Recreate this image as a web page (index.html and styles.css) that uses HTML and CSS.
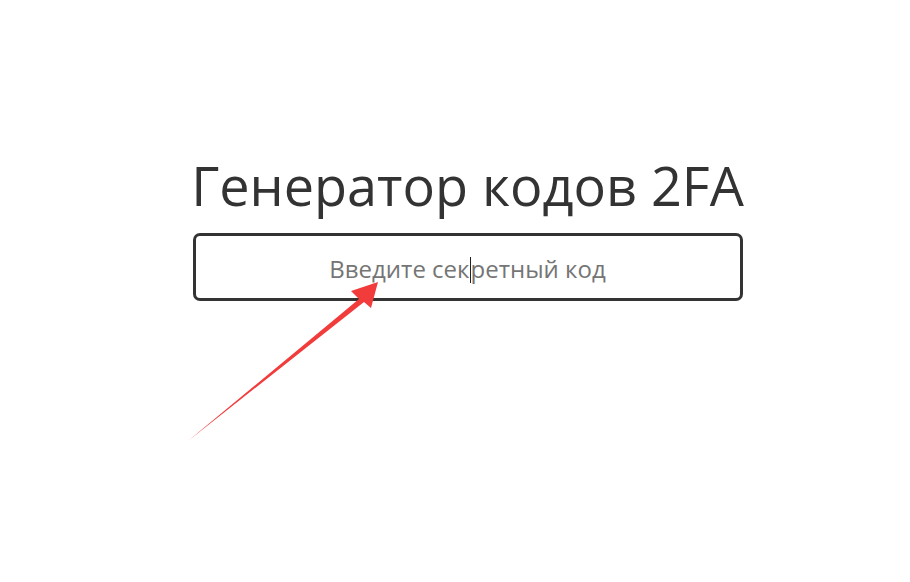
FILE: index.html
```html
<!DOCTYPE html>
<html lang="ru">
<head>
<meta charset="utf-8">
<title>Генератор кодов 2FA</title>
<link rel="stylesheet" href="styles.css">
</head>
<body>
<main class="page">
  <h1 class="title">Генератор кодов 2FA</h1>
  <div class="field">
    <span class="placeholder">Введите сек<span class="caret"></span>ретный код</span>
  </div>
</main>
<svg class="arrow" width="910" height="582" viewBox="0 0 910 582">
  <path d="M188 441 L359 299 L351 291 L378 282 L371 308 L364 302 Z" fill="#f23b3b"/>
</svg>
</body>
</html>
```
FILE: styles.css
```css
html, body {
  margin: 0;
  padding: 0;
  background: #ffffff;
}
body {
  width: 910px;
  height: 582px;
  position: relative;
  overflow: hidden;
  font-family: "Open Sans", "Noto Sans", sans-serif;
}
.page {
  display: flex;
  flex-direction: column;
  align-items: center;
  padding-top: 148px;
  padding-left: 25px;
}
.title {
  margin: 0;
  font-weight: 400;
  font-size: 54px;
  line-height: 74px;
  color: #333333;
}
.field {
  margin-top: 11px;
  width: 550px;
  height: 68px;
  box-sizing: border-box;
  border: 3px solid #333333;
  border-radius: 7px;
  display: flex;
  align-items: center;
  justify-content: center;
  padding-top: 2px;
}
.placeholder {
  font-size: 24px;
  color: #757575;
}
.caret {
  display: inline-block;
  width: 1px;
  height: 26px;
  background: #222;
  vertical-align: -5px;
}
.arrow {
  position: absolute;
  left: 0;
  top: 0;
  pointer-events: none;
}
```
